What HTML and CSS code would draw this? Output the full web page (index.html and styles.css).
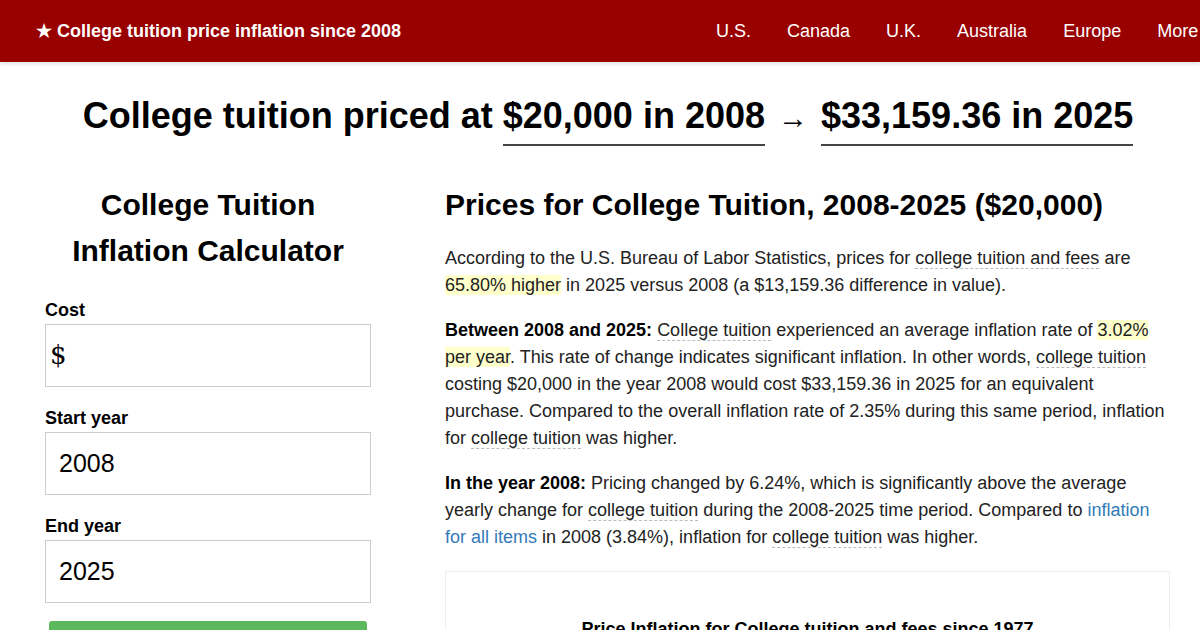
FILE: index.html
```html
<!DOCTYPE html>
<html>
<head>
<meta charset="utf-8">
<link rel="stylesheet" href="styles.css">
</head>
<body>
<header class="topbar">
  <div class="brand">★ College tuition price inflation since 2008</div>
  <nav class="nav">
    <a>U.S.</a><a>Canada</a><a>U.K.</a><a>Australia</a><a>Europe</a><a>More</a>
  </nav>
</header>
<h1 class="headline">College tuition priced at <span class="amt">$20,000 in 2008</span> <span class="arrow">→</span> <span class="amt">$33,159.36 in 2025</span></h1>
<main class="layout">
  <aside class="calc">
    <h2 class="calc-title">College Tuition<br>Inflation Calculator</h2>
    <label class="lbl">Cost</label>
    <div class="field"><span class="dollar">$</span></div>
    <label class="lbl">Start year</label>
    <div class="field">2008</div>
    <label class="lbl">End year</label>
    <div class="field">2025</div>
    <div class="btn"></div>
  </aside>
  <section class="content">
    <h2 class="sec-title">Prices for College Tuition, 2008-2025 ($20,000)</h2>
    <p>According to the U.S. Bureau of Labor Statistics, prices for <span class="term">college tuition and fees</span> are <span class="hl">65.80% higher</span> in 2025 versus 2008 (a $13,159.36 difference in value).</p>
    <p><b>Between 2008 and 2025:</b> <span class="term">College tuition</span> experienced an average inflation rate of <span class="hl">3.02% per year</span>. This rate of change indicates significant inflation. In other words, <span class="term">college tuition</span> costing $20,000 in the year 2008 would cost $33,159.36 in 2025 for an equivalent purchase. Compared to the overall inflation rate of 2.35% during this same period, inflation for <span class="term">college tuition</span> was higher.</p>
    <p><b>In the year 2008:</b> Pricing changed by 6.24%, which is significantly above the average yearly change for <span class="term">college tuition</span> during the 2008-2025 time period. Compared to <a class="link">inflation for all items</a> in 2008 (3.84%), inflation for <span class="term">college tuition</span> was higher.</p>
    <div class="chart">
      <div class="chart-title">Price Inflation for College tuition and fees since 1977</div>
    </div>
  </section>
</main>
</body>
</html>
```

FILE: styles.css
```css
html, body {
  margin: 0;
  padding: 0;
  background: #fff;
  color: #000;
  font-family: "Liberation Sans", Arial, sans-serif;
  overflow: hidden;
}
.topbar {
  height: 62px;
  background: #990000;
  color: #fff;
  display: flex;
  align-items: center;
  box-shadow: 0 2px 4px rgba(0, 0, 0, 0.12);
  position: relative;
  overflow: hidden;
  white-space: nowrap;
}
.brand {
  flex: none;
  width: 662px;
  padding-left: 36px;
  font-weight: bold;
  font-size: 18px;
}
.nav {
  display: flex;
  flex: none;
  font-size: 18px;
}
.nav a {
  padding: 0 18px;
  color: #fff;
}
.headline {
  margin: 30px 0 0;
  padding-left: 16px;
  text-align: center;
  font-size: 36px;
  font-weight: bold;
  line-height: 48px;
  white-space: nowrap;
}
.amt {
  display: inline-block;
  border-bottom: 2px solid #444;
  line-height: 44px;
  padding-bottom: 6px;
  vertical-align: baseline;
}
.arrow {
  font-weight: normal;
  font-size: 30px;
  margin: 0 3px;
}
.layout {
  display: flex;
  margin-top: 36px;
  padding-left: 45px;
  gap: 74px;
}
.calc {
  flex: none;
  width: 326px;
  display: flex;
  flex-direction: column;
}
.calc-title {
  margin: 0 0 26px;
  text-align: center;
  font-size: 30px;
  line-height: 46px;
  font-weight: bold;
}
.lbl {
  font-weight: bold;
  font-size: 18px;
  line-height: 20px;
  margin-bottom: 4px;
}
.field {
  height: 61px;
  border: 1px solid #ccc;
  margin-bottom: 21px;
  font-size: 25px;
  line-height: 61px;
  padding-left: 13px;
}
.dollar {
  font-family: "DejaVu Serif", serif;
  font-size: 26px;
  margin-left: -9px;
}
.btn {
  margin: -3px 4px 0;
  height: 40px;
  background: #5cb85c;
  border-radius: 3px;
}
.content {
  flex: none;
  width: 725px;
}
.sec-title {
  margin: 0 0 17px;
  font-size: 30px;
  line-height: 46px;
  font-weight: bold;
}
.content p {
  margin: 0 0 18px;
  font-size: 18px;
  line-height: 27px;
  color: #222;
}
.content b {
  color: #000;
}
.term {
  border-bottom: 1px dashed #bbb;
}
.hl {
  background: #ffffcc;
}
.link {
  color: #337ab7;
}
.chart {
  margin-top: 20px;
  border: 1px solid #eee;
  height: 200px;
  padding-top: 46px;
  box-sizing: border-box;
}
.chart-title {
  text-align: center;
  font-weight: bold;
  font-size: 18px;
  line-height: 22px;
}
```
